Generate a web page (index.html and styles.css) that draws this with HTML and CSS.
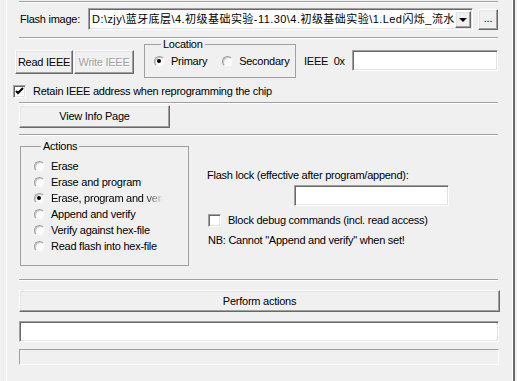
FILE: index.html
```html
<!DOCTYPE html>
<html lang="en">
<head>
    <meta charset="UTF-8">
    <title>Flash</title>
    <link rel="stylesheet" href="styles.css">
</head>
<body>
<div class="panel">
    <div class="sep"></div>

    <div class="flash-row">
        <span class="flash-label">Flash image:</span>
        <div class="combo field">
            <span class="combo-text">D:\zjy\蓝牙底层\4.初级基础实验-11.30\4.初级基础实验\1.Led闪烁_流水灯\hex\Led.hex</span>
            <span class="combo-drop btn"><i class="arrow"></i></span>
        </div>
        <button class="btn dots">...</button>
    </div>

    <div class="sep sep-flash"></div>

    <div class="ieee-row">
        <div class="ieee-buttons">
            <button class="btn ieee-btn read">Read IEEE</button>
            <button class="btn ieee-btn write" disabled>Write IEEE</button>
        </div>
        <fieldset class="group location">
            <legend>Location</legend>
            <label class="opt"><span class="radio on"></span>Primary</label>
            <label class="opt"><span class="radio"></span>Secondary</label>
        </fieldset>
        <span class="ieee-label">IEEE&nbsp;&nbsp;0x</span>
        <div class="field ieee-input"></div>
    </div>

    <label class="check-row retain"><span class="check on"><svg width="9" height="9" viewBox="0 0 9 9"><path d="M1 4 L3 6 L8 1" fill="none" stroke="#000" stroke-width="2"/></svg></span>Retain IEEE address when reprogramming the chip</label>

    <div class="sep sep-retain"></div>

    <button class="btn info-btn">View Info Page</button>

    <div class="sep sep-info"></div>

    <div class="actions-row">
        <fieldset class="group actions">
            <legend>Actions</legend>
            <label class="opt"><span class="radio"></span>Erase</label>
            <label class="opt"><span class="radio"></span>Erase and program</label>
            <label class="opt clip"><span class="radio on"></span>Erase, program and verify</label>
            <label class="opt"><span class="radio"></span>Append and verify</label>
            <label class="opt"><span class="radio"></span>Verify against hex-file</label>
            <label class="opt"><span class="radio"></span>Read flash into hex-file</label>
        </fieldset>
        <div class="lock">
            <div class="lock-title">Flash lock (effective after program/append):</div>
            <div class="field lock-input"></div>
            <label class="check-row block"><span class="check"></span>Block debug commands (incl. read access)</label>
            <div class="note">NB: Cannot "Append and verify" when set!</div>
        </div>
    </div>

    <div class="sep sep-actions"></div>

    <button class="btn perform-btn">Perform actions</button>
    <div class="field status"></div>
    <div class="progress"></div>
</div>
</body>
</html>
```

FILE: styles.css
```css
*{
    box-sizing: border-box;
}
body{
    margin: 0;
    background: #f0f0f0;
    font: 11px/13px "Liberation Sans", "Noto Sans CJK SC", sans-serif;
    letter-spacing: -0.25px;
    color: #000;
}
.panel{
    margin-left: 6px;
    width: 509px;
    height: 381px;
    padding: 1px 0 0 12px;
    border-left: 1px solid #fff;
    border-right: 2px solid #6a6a6a;
    box-shadow: inset -1px 0 #fff;
    overflow: hidden;
}
.sep{
    width: 479px;
    border-top: 1px solid #a0a0a0;
    border-bottom: 1px solid #fff;
}
.btn{
    display: flex;
    align-items: center;
    justify-content: center;
    padding: 0;
    background: #f0f0f0;
    font: inherit;
    letter-spacing: inherit;
    color: #000;
    border: 1px solid;
    border-color: #fff #696969 #696969 #fff;
    box-shadow: inset -1px -1px #a0a0a0, inset 1px 1px #e3e3e3;
}
.field{
    background: #fff;
    border: 1px solid;
    border-color: #a0a0a0 #fff #fff #a0a0a0;
    box-shadow: inset 1px 1px #696969, inset -1px -1px #e3e3e3;
}

/* flash image row */
.flash-row{
    display: flex;
    align-items: center;
    margin-top: 5px;
    height: 22px;
}
.flash-label{
    width: 69px;
    padding-left: 1px;
}
.combo{
    display: flex;
    align-items: center;
    width: 385px;
    height: 22px;
    padding: 2px 1px 2px 2px;
}
.combo-text{
    flex: 1;
    overflow: hidden;
    white-space: nowrap;
    padding-left: 1px;
    letter-spacing: 0.45px;
}
.combo-drop{
    width: 16px;
    height: 17px;
    flex: none;
}
.arrow{
    width: 0;
    height: 0;
    border-left: 4px solid transparent;
    border-right: 4px solid transparent;
    border-top: 4px solid #000;
    margin-top: 1px;
}
.dots{
    margin-left: 5px;
    width: 20px;
    height: 21px;
    align-items: flex-end;
    padding-bottom: 4px;
}
.sep-flash{
    margin-top: 7px;
}

/* ieee row */
.ieee-row{
    display: flex;
    align-items: flex-start;
    height: 39px;
}
.ieee-buttons{
    display: flex;
    margin-left: -4px;
    margin-top: 11px;
    gap: 1px;
}
.ieee-btn{
    height: 24px;
}
.read{
    width: 58px;
}
.write{
    width: 60px;
    color: #a0a0a0;
    text-shadow: 1px 1px #fff;
}
.group{
    margin: 0;
    padding: 0;
    border: 1px solid #a0a0a0;
}
.group legend{
    margin-left: 7px;
    padding: 0 2px;
    line-height: 11px;
}
.location{
    display: flex;
    align-items: center;
    margin-left: 10px;
    width: 152px;
    height: 39px;
    padding: 0 0 4px 9px;
    gap: 15px;
}
.opt{
    display: flex;
    align-items: center;
    height: 16px;
    white-space: nowrap;
}
.clip{
    width: 128px;
    overflow: hidden;
    -webkit-mask-image: linear-gradient(to right, #000 110px, rgba(0,0,0,0.1));
    mask-image: linear-gradient(to right, #000 110px, rgba(0,0,0,0.1));
}
.radio{
    position: relative;
    flex: none;
    width: 11px;
    height: 11px;
    margin-right: 6px;
    border-radius: 50%;
    background: #fcfcfc;
    border: 1px solid;
    border-color: #9a9a9a #f4f4f4 #f4f4f4 #9a9a9a;
    box-shadow: inset 1px 1px #c8c8c8;
}
.radio.on::after{
    content: "";
    position: absolute;
    left: 2px;
    top: 2px;
    width: 4px;
    height: 4px;
    border-radius: 50%;
    background: #000;
}
.ieee-label{
    margin-left: 8px;
    margin-top: 16px;
}
.ieee-input{
    margin-left: 7px;
    margin-top: 11px;
    width: 146px;
    height: 21px;
}

/* checkboxes */
.check-row{
    display: flex;
    align-items: center;
    height: 13px;
}
.check{
    display: flex;
    align-items: center;
    justify-content: center;
    width: 13px;
    height: 13px;
    margin-right: 7px;
    background: #fff;
    border: 1px solid;
    border-color: #a0a0a0 #fff #fff #a0a0a0;
    box-shadow: inset 1px 1px #696969, inset -1px -1px #e3e3e3;
}
.retain{
    margin-top: 7px;
    margin-left: -6px;
}
.sep-retain{
    margin-top: 4px;
}
.info-btn{
    margin-top: 1px;
    width: 151px;
    height: 23px;
}
.sep-info{
    margin-top: 6px;
}

/* actions */
.actions-row{
    display: flex;
    margin-top: 5px;
}
.actions{
    margin-left: 1px;
    width: 169px;
    height: 125px;
    padding: 6px 0 0 13px;
}
.lock{
    margin-left: 18px;
    padding-top: 28px;
}
.lock-input{
    margin: 3px 0 0 87px;
    width: 155px;
    height: 21px;
}
.block{
    margin-top: 8px;
    margin-left: 1px;
}
.note{
    margin-top: 7px;
    margin-left: 1px;
}
.sep-actions{
    margin-top: 13px;
}

/* bottom */
.perform-btn{
    margin-top: 9px;
    width: 481px;
    height: 22px;
}
.status{
    margin-top: 9px;
    width: 480px;
    height: 21px;
}
.progress{
    margin-top: 7px;
    width: 480px;
    height: 16px;
    border: 1px solid;
    border-color: #a0a0a0 #fff #fff #a0a0a0;
}
```
